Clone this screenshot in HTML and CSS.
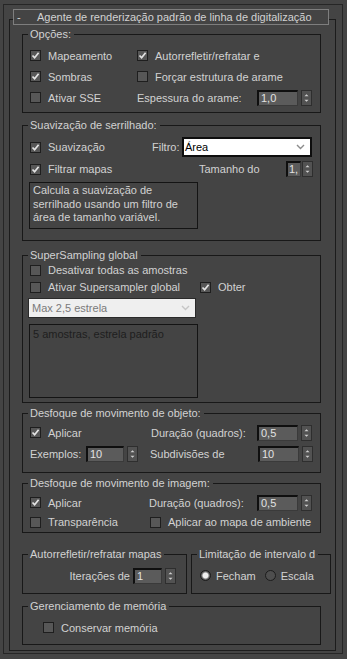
FILE: index.html
```html
<!DOCTYPE html>
<html lang="pt">
    <head>
        <meta charset="UTF-8">
        <title>Agente de renderização</title>
        <link rel="stylesheet" href="styles.css">
    </head>
    <body>
        <div class="panel">
            <div class="rollout">
                <div class="rollout-head"><span class="toggle">-</span>Agente de renderização padrão de linha de digitalização</div>

                <div class="group g-options">
                    <div class="legend">Opções:</div>
                    <div class="row">
                        <label class="check col-a"><span class="box"><svg viewBox="0 0 9 9"><path d="M1.5 4.5 L3.6 6.8 L7.6 1.8"/></svg></span>Mapeamento</label>
                        <label class="check"><span class="box"><svg viewBox="0 0 9 9"><path d="M1.5 4.5 L3.6 6.8 L7.6 1.8"/></svg></span>Autorrefletir/refratar e</label>
                    </div>
                    <div class="row">
                        <label class="check col-a"><span class="box"><svg viewBox="0 0 9 9"><path d="M1.5 4.5 L3.6 6.8 L7.6 1.8"/></svg></span>Sombras</label>
                        <label class="check"><span class="box"></span>Forçar estrutura de arame</label>
                    </div>
                    <div class="row">
                        <label class="check col-a"><span class="box"></span>Ativar SSE</label>
                        <span class="lbl w120">Espessura do arame:</span>
                        <span class="spin"><span class="field w41">1,0</span><span class="arrows"><svg viewBox="0 0 11 16"><path d="M3 6 L8 6 L5.5 3.5 Z M3 10 L8 10 L5.5 12.5 Z"/></svg></span></span>
                    </div>
                </div>

                <div class="group g-aa">
                    <div class="legend">Suavização de serrilhado:</div>
                    <div class="row tall">
                        <label class="check w122"><span class="box"><svg viewBox="0 0 9 9"><path d="M1.5 4.5 L3.6 6.8 L7.6 1.8"/></svg></span>Suavização</label>
                        <span class="lbl w30">Filtro:</span>
                        <span class="select">Área<svg viewBox="0 0 9 6"><path d="M1 1 L4.5 4.5 L8 1"/></svg></span>
                    </div>
                    <div class="row tall">
                        <label class="check w169"><span class="box"><svg viewBox="0 0 9 9"><path d="M1.5 4.5 L3.6 6.8 L7.6 1.8"/></svg></span>Filtrar mapas</label>
                        <span class="lbl w87">Tamanho do</span>
                        <span class="spin"><span class="field w15">1,</span><span class="arrows narrow"><svg viewBox="0 0 11 16"><path d="M3 6 L8 6 L5.5 3.5 Z M3 10 L8 10 L5.5 12.5 Z"/></svg></span></span>
                    </div>
                    <div class="desc">Calcula a suavização de<br>serrilhado usando um filtro de<br>área de tamanho variável.</div>
                </div>

                <div class="group g-super">
                    <div class="legend">SuperSampling global</div>
                    <div class="row r16">
                        <label class="check"><span class="box"></span>Desativar todas as amostras</label>
                    </div>
                    <div class="row r18">
                        <label class="check w170"><span class="box"></span>Ativar Supersampler global</label>
                        <label class="check"><span class="box"><svg viewBox="0 0 9 9"><path d="M1.5 4.5 L3.6 6.8 L7.6 1.8"/></svg></span>Obter</label>
                    </div>
                    <div class="select off">Max 2,5 estrela<svg viewBox="0 0 9 6"><path d="M1 1 L4.5 4.5 L8 1"/></svg></div>
                    <div class="desc off">5 amostras, estrela padrão</div>
                </div>

                <div class="group g-objblur">
                    <div class="legend">Desfoque de movimento de objeto:</div>
                    <div class="row">
                        <label class="check w121"><span class="box"><svg viewBox="0 0 9 9"><path d="M1.5 4.5 L3.6 6.8 L7.6 1.8"/></svg></span>Aplicar</label>
                        <span class="lbl w106">Duração (quadros):</span>
                        <span class="spin"><span class="field w41">0,5</span><span class="arrows"><svg viewBox="0 0 11 16"><path d="M3 6 L8 6 L5.5 3.5 Z M3 10 L8 10 L5.5 12.5 Z"/></svg></span></span>
                    </div>
                    <div class="row">
                        <span class="lbl w56">Exemplos:</span>
                        <span class="spin"><span class="field w38">10</span><span class="arrows"><svg viewBox="0 0 11 16"><path d="M3 6 L8 6 L5.5 3.5 Z M3 10 L8 10 L5.5 12.5 Z"/></svg></span></span>
                        <span class="lbl w108 ml12">Subdivisões de</span>
                        <span class="spin"><span class="field w41">10</span><span class="arrows"><svg viewBox="0 0 11 16"><path d="M3 6 L8 6 L5.5 3.5 Z M3 10 L8 10 L5.5 12.5 Z"/></svg></span></span>
                    </div>
                </div>

                <div class="group g-imgblur">
                    <div class="legend">Desfoque de movimento de imagem:</div>
                    <div class="row">
                        <label class="check w119"><span class="box"><svg viewBox="0 0 9 9"><path d="M1.5 4.5 L3.6 6.8 L7.6 1.8"/></svg></span>Aplicar</label>
                        <span class="lbl w108">Duração (quadros):</span>
                        <span class="spin"><span class="field w41">0,5</span><span class="arrows"><svg viewBox="0 0 11 16"><path d="M3 6 L8 6 L5.5 3.5 Z M3 10 L8 10 L5.5 12.5 Z"/></svg></span></span>
                    </div>
                    <div class="row r18">
                        <label class="check w120"><span class="box"></span>Transparência</label>
                        <label class="check"><span class="box"></span>Aplicar ao mapa de ambiente</label>
                    </div>
                </div>

                <div class="pair">
                    <div class="group g-reflect">
                        <div class="legend">Autorrefletir/refratar mapas</div>
                        <div class="row end">
                            <span class="lbl">Iterações de</span>
                            <span class="spin"><span class="field w29">1</span><span class="arrows"><svg viewBox="0 0 11 16"><path d="M3 6 L8 6 L5.5 3.5 Z M3 10 L8 10 L5.5 12.5 Z"/></svg></span></span>
                        </div>
                    </div>
                    <div class="group g-range">
                        <div class="legend">Limitação de intervalo d</div>
                        <div class="row">
                            <label class="radio-opt"><span class="radio on"></span>Fecham</label>
                            <label class="radio-opt"><span class="radio"></span>Escala</label>
                        </div>
                    </div>
                </div>

                <div class="group g-memory">
                    <div class="legend">Gerenciamento de memória</div>
                    <div class="row">
                        <label class="check"><span class="box"></span>Conservar memória</label>
                    </div>
                </div>
            </div>
        </div>
    </body>
</html>
```

FILE: styles.css
```css
* {
    box-sizing: border-box;
}
body {
    margin: 0;
    background-color: #444444;
    font-family: "Liberation Sans", Arial, sans-serif;
    font-size: 11px;
    color: #d2d2d2;
}
.panel {
    width: 340px;
    margin: 4px 0 0 3px;
    border: 1px solid #262626;
    padding-bottom: 2px;
}
.rollout {
    width: 327px;
    margin: 14px 0 0 5px;
    border: 1px solid #1c1c1c;
    padding-bottom: 5px;
}
.rollout-head {
    display: flex;
    width: 316px;
    height: 16px;
    margin: -11px 0 0 3px;
    padding-left: 3px;
    border: 1px solid #7e7e7e;
    background-color: #444444;
    line-height: 14px;
    white-space: nowrap;
}
.toggle {
    width: 20px;
}

/* group boxes */
.group {
    width: 299px;
    margin-left: 12px;
    border: 1px solid #181818;
}
.legend {
    width: fit-content;
    height: 13px;
    margin: -7px 0 0 5px;
    padding: 0 3px 0 2px;
    line-height: 13px;
    background-color: #444444;
    white-space: nowrap;
}
.g-options { margin-top: 9px; padding-bottom: 4px; }
.g-options .legend { margin-bottom: 4px; }
.g-aa { margin-top: 12px; padding-bottom: 11px; }
.g-aa .legend { margin-bottom: 4px; }
.g-super { margin-top: 14px; padding-bottom: 4px; }
.g-objblur { margin-top: 10px; padding-bottom: 8px; }
.g-objblur .legend { margin-bottom: 2px; }
.g-imgblur { margin-top: 10px; padding-bottom: 1px; }
.g-imgblur .legend { margin-bottom: 2px; }
.pair {
    display: flex;
    gap: 4px;
    margin: 21px 0 0 12px;
}
.pair .group {
    margin-left: 0;
    padding-bottom: 7px;
}
.pair .legend { margin-bottom: 4px; }
.g-reflect { width: 165px; }
.g-range { width: 140px; }
.g-memory { margin-top: 12px; padding-bottom: 6px; }
.g-memory .legend { margin-bottom: 4px; }

/* rows */
.row {
    display: flex;
    align-items: center;
    height: 21px;
    padding-left: 7px;
    white-space: nowrap;
}
.row.tall { height: 22px; }
.row.r16 { height: 16px; }
.row.r18 { height: 18px; }
.row.end {
    justify-content: flex-end;
    padding-right: 10px;
}
.g-range .row { padding-left: 8px; }
.g-memory .row { padding-left: 20px; }

.col-a { width: 107px; }
.w30 { width: 30px; }
.w56 { width: 56px; }
.w87 { width: 87px; }
.w106 { width: 106px; }
.w108 { width: 108px; }
.w119 { width: 119px; }
.w120 { width: 120px; }
.w121 { width: 121px; }
.w122 { width: 122px; }
.w169 { width: 169px; }
.w170 { width: 170px; }
.ml12 { margin-left: 12px; }
.g-reflect .lbl { margin-right: 3px; }

/* checkbox */
.check {
    display: flex;
    align-items: center;
}
.box {
    display: flex;
    align-items: center;
    justify-content: center;
    width: 11px;
    height: 11px;
    margin-right: 7px;
    border: 1px solid #1e1e1e;
    background-color: #575757;
    flex-shrink: 0;
}
.box svg {
    width: 9px;
    height: 9px;
}
.box path {
    fill: none;
    stroke: #e4e4e4;
    stroke-width: 1.7;
}

/* radio */
.radio-opt {
    display: flex;
    align-items: center;
    margin-right: 9px;
}
.radio {
    width: 11px;
    height: 11px;
    margin-right: 5px;
    border-radius: 50%;
    border: 1px solid #1c1c1c;
    background-color: #4e4e4e;
}
.radio.on {
    background: radial-gradient(circle, #eeeeee 0 2.5px, #7a7a7a 3.5px, #3a3a3a 5px);
}

/* spinner */
.spin {
    display: flex;
    align-items: center;
    gap: 3px;
}
.field {
    height: 16px;
    padding-left: 2px;
    border-top: 2px solid #0f0f0f;
    border-left: 2px solid #0f0f0f;
    border-right: 1px solid #3a3a3a;
    border-bottom: 1px solid #3a3a3a;
    background-color: #5b5b5b;
    color: #e2e2e2;
    line-height: 13px;
    overflow: hidden;
}
.w15 { width: 15px; padding-left: 1px; }
.w29 { width: 29px; }
.w38 { width: 38px; }
.w41 { width: 41px; }
.arrows {
    width: 11px;
    height: 16px;
    border: 1px solid #2e2e2e;
    background-color: #525252;
}
.arrows.narrow { margin-left: -2px; }
.arrows svg {
    display: block;
    width: 9px;
    height: 14px;
}
.arrows path {
    fill: #cfcfcf;
}

/* dropdowns */
.select {
    display: flex;
    align-items: center;
    justify-content: space-between;
    width: 130px;
    height: 20px;
    padding: 0 5px 0 1px;
    border: 2px solid #0e0e0e;
    background-color: #ffffff;
    color: #000000;
}
.select svg {
    width: 9px;
    height: 6px;
}
.select path {
    fill: none;
    stroke: #8c8c8c;
    stroke-width: 1.4;
}
.select.off {
    width: 168px;
    margin: 2px 0 0 5px;
    padding-left: 3px;
    border: 1px solid #2a2a2a;
    background-color: #efefef;
    color: #7a7a7a;
}
.select.off path {
    stroke: #c6c6c6;
}

/* description boxes */
.desc {
    width: 169px;
    height: 47px;
    margin: 2px 0 0 6px;
    padding: 1px 3px;
    border: 1px solid #141414;
    line-height: 13.5px;
}
.desc.off {
    height: 74px;
    margin-top: 6px;
    padding-top: 3px;
    color: #1e1e1e;
}
```
